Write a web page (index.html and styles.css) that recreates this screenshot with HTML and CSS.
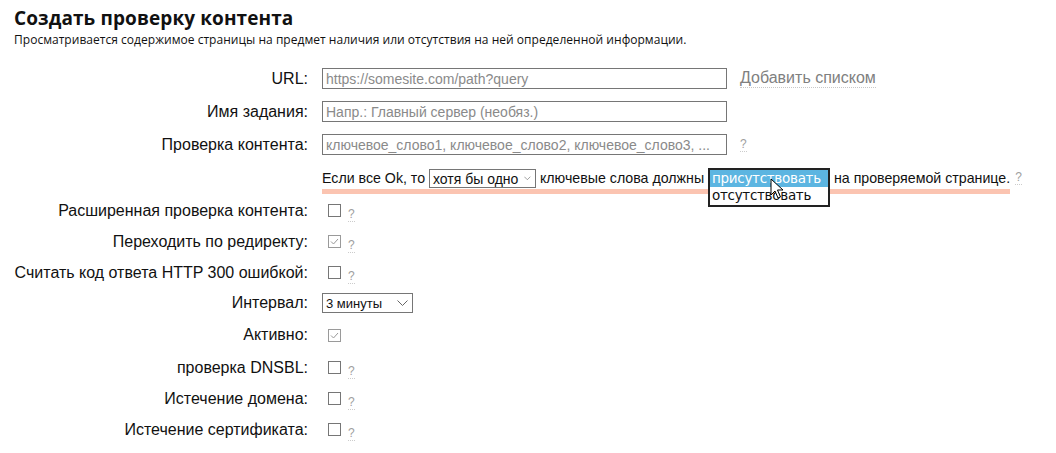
FILE: index.html
```html
<!DOCTYPE html>
<html lang="ru">
<head>
    <meta charset="UTF-8">
    <meta name="viewport" content="width=device-width, initial-scale=1.0">
    <title>Создать проверку контента</title>
    <link rel="stylesheet" href="styles.css">
</head>
<body>

    <h1 class="title">Создать проверку контента</h1>
    <p class="lead">Просматривается содержимое страницы на предмет наличия или отсутствия на ней определенной информации.</p>

    <form class="form">

        <div class="row row-input">
            <label class="label">URL:</label>
            <div class="field">
                <input class="text" type="text" placeholder="https://somesite.com/path?query">
                <a class="add-list">Добавить списком</a>
            </div>
        </div>

        <div class="row row-input">
            <label class="label">Имя задания:</label>
            <div class="field">
                <input class="text" type="text" placeholder="Напр.: Главный сервер (необяз.)">
            </div>
        </div>

        <div class="row row-input">
            <label class="label">Проверка контента:</label>
            <div class="field">
                <input class="text" type="text" placeholder="ключевое_слово1, ключевое_слово2, ключевое_слово3, ...">
                <a class="help help-big">?</a>
            </div>
        </div>

        <div class="row row-sentence">
            <div class="label"></div>
            <div class="field">
                <span class="sentence">Если все Ok, то <span class="select select-any">хотя бы одно<svg class="chev" width="11" height="7" viewBox="0 0 11 7"><path d="M0.5 0.5 L5.5 5.5 L10.5 0.5" fill="none" stroke="#666" stroke-width="1"/></svg></span> ключевые слова должны <span class="select-slot">
                    <span class="dropdown">
                        <span class="option selected">присутствовать</span>
                        <span class="option">отсутствовать</span>
                    </span>
                    <svg class="cursor" width="14" height="22" viewBox="0 0 14 22"><path d="M1 1 L1 17 L5 13 L8 20 L10.5 19 L7.5 12 L13 12 Z" fill="#fff" stroke="#000" stroke-width="1"/></svg>
                </span> на проверяемой странице.</span>
                <a class="help help-mid">?</a>
            </div>
        </div>

        <div class="row row-check">
            <label class="label">Расширенная проверка контента:</label>
            <div class="field"><span class="box"></span><a class="help">?</a></div>
        </div>

        <div class="row row-check">
            <label class="label">Переходить по редиректу:</label>
            <div class="field"><span class="box checked"><svg width="11" height="11" viewBox="0 0 11 11"><path d="M2 5.5 L4.5 8 L9 3" fill="none" stroke="#999" stroke-width="1"/></svg></span><a class="help">?</a></div>
        </div>

        <div class="row row-check">
            <label class="label">Считать код ответа HTTP 300 ошибкой:</label>
            <div class="field"><span class="box"></span><a class="help">?</a></div>
        </div>

        <div class="row row-interval">
            <label class="label">Интервал:</label>
            <div class="field">
                <span class="select select-interval">3 минуты<svg class="chev" width="11" height="7" viewBox="0 0 11 7"><path d="M0.5 0.5 L5.5 5.5 L10.5 0.5" fill="none" stroke="#666" stroke-width="1"/></svg></span>
            </div>
        </div>

        <div class="row row-active">
            <label class="label">Активно:</label>
            <div class="field"><span class="box checked"><svg width="11" height="11" viewBox="0 0 11 11"><path d="M2 5.5 L4.5 8 L9 3" fill="none" stroke="#999" stroke-width="1"/></svg></span></div>
        </div>

        <div class="row row-check">
            <label class="label">проверка DNSBL:</label>
            <div class="field"><span class="box"></span><a class="help">?</a></div>
        </div>

        <div class="row row-check">
            <label class="label">Истечение домена:</label>
            <div class="field"><span class="box"></span><a class="help">?</a></div>
        </div>

        <div class="row row-check">
            <label class="label">Истечение сертификата:</label>
            <div class="field"><span class="box"></span><a class="help">?</a></div>
        </div>

    </form>

</body>
</html>
```

FILE: styles.css
```css
* {
    box-sizing: border-box;
}

body {
    margin: 0;
    padding: 0 14px;
    background: #fff;
    color: #111;
    font-family: "Liberation Sans", Arial, sans-serif;
}

.title {
    margin: 0;
    padding-top: 6px;
    font-family: "Open Sans", "Noto Sans", sans-serif;
    font-size: 19px;
    line-height: 24px;
    font-weight: 700;
    letter-spacing: 0.1px;
    color: #111;
}

.lead {
    margin: 2px 0 0;
    font-family: "Open Sans", "Noto Sans", sans-serif;
    font-size: 12px;
    line-height: 16px;
    letter-spacing: 0.03px;
}

.form {
    margin-top: 14px;
}

.row {
    display: grid;
    grid-template-columns: 294px 1fr;
    column-gap: 14px;
    align-items: center;
}

.row-input { height: 33px; }
.row-sentence { height: 34px; }
.row-check { height: 31px; }
.row-interval { height: 30px; }
.row-active { height: 34px; }

.label {
    text-align: right;
    font-size: 16px;
    color: #111;
}

.field {
    display: flex;
    align-items: center;
}

.text {
    width: 405px;
    height: 21px;
    padding: 0 3px;
    border: 1px solid #767676;
    font-family: "Liberation Sans", Arial, sans-serif;
    font-size: 14px;
    color: #333;
}

.text::placeholder {
    color: #8a8a8a;
}

.add-list {
    margin-left: 13px;
    font-size: 16px;
    color: #808080;
    border-bottom: 1px dotted #c8c8c8;
    line-height: 18px;
}

.help {
    margin-left: 7px;
    margin-top: 8px;
    font-size: 12px;
    line-height: 13px;
    color: #a0a0a0;
    border-bottom: 1px dotted #ccc;
}

.help-big {
    margin-left: 13px;
    margin-top: 0;
}

.help-mid {
    margin-left: 5px;
    margin-top: 0;
    align-self: center;
}

.sentence {
    display: inline-block;
    white-space: nowrap;
    font-size: 14.2px;
    line-height: 20px;
    padding-bottom: 1px;
    border-bottom: 5px solid #fbc4b1;
    margin-top: 6px;
}

.select {
    display: inline-flex;
    align-items: center;
    justify-content: space-between;
    white-space: nowrap;
    height: 19px;
    padding: 0 4px 0 3px;
    border: 1px solid #767676;
    background: #fff;
    vertical-align: middle;
    font-size: 14px;
}

.select-any {
    width: 107px;
}

.select-interval {
    width: 91px;
    height: 20px;
    font-size: 13px;
    color: #111;
}

.chev {
    margin-left: 6px;
}

.select-slot {
    position: relative;
    display: inline-block;
    width: 122px;
    height: 18px;
    vertical-align: middle;
}

.dropdown {
    position: absolute;
    left: 0;
    top: -2px;
    width: 122px;
    border: 2px solid #222;
    background: #fff;
    display: flex;
    flex-direction: column;
}

.option {
    font-family: "DejaVu Sans", Verdana, sans-serif;
    font-size: 13.5px;
    line-height: 17.5px;
    padding: 0 2px;
    letter-spacing: -0.3px;
    color: #111;
}

.option.selected {
    background: #5cb5e1;
    color: #fff;
}

.cursor {
    position: absolute;
    left: 62px;
    top: 8px;
}

.box {
    display: inline-flex;
    align-items: center;
    justify-content: center;
    width: 13px;
    height: 13px;
    margin-left: 6px;
    border: 1px solid #767676;
    background: #fff;
}

.box.checked {
    border-color: #9a9a9a;
}
```
